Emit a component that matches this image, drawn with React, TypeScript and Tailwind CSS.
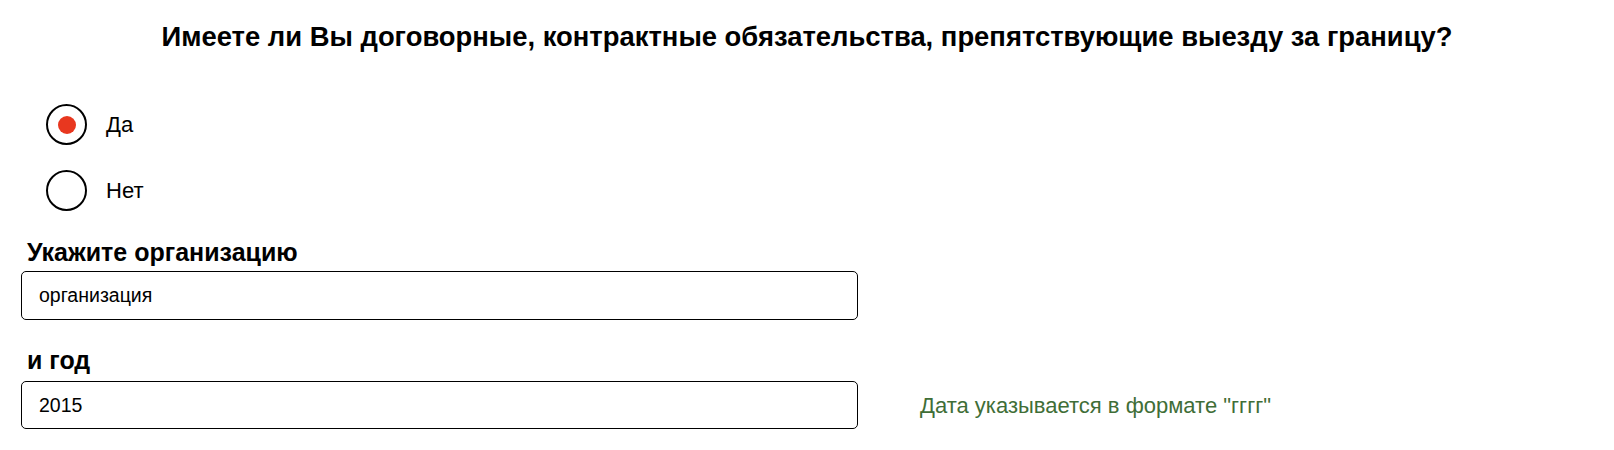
import { useState } from 'react';

function App() {
  const [answer, setAnswer] = useState<'yes' | 'no'>('yes');
  const [org, setOrg] = useState('организация');
  const [year, setYear] = useState('2015');

  const options = [
    { value: 'yes' as const, label: 'Да' },
    { value: 'no' as const, label: 'Нет' }
  ];

  return (
    <div className="min-h-screen bg-white text-black font-['Liberation_Sans',Arial,sans-serif]">
      <h1 className="pt-[22px] text-center text-[27.4px] leading-[30px] font-bold">
        Имеете ли Вы договорные, контрактные обязательства, препятствующие выезду за границу?
      </h1>

      <div className="mt-[52px] pl-[46px] flex flex-col gap-[25px]">
        {options.map((option) => (
          <label key={option.value} className="flex items-center gap-[19px] cursor-pointer">
            <span className="w-[41px] h-[41px] rounded-full border-2 border-black flex items-center justify-center">
              {answer === option.value && (
                <span className="w-[18px] h-[18px] rounded-full bg-[#e8371f]" />
              )}
            </span>
            <input
              type="radio"
              name="contract"
              className="hidden"
              checked={answer === option.value}
              onChange={() => setAnswer(option.value)}
            />
            <span className="text-[22px]">{option.label}</span>
          </label>
        ))}
      </div>

      <div className="px-[21px] mt-[26px]">
        <div className="text-[25px] leading-[30px] font-bold pl-[6px]">Укажите организацию</div>
        <input
          value={org}
          onChange={(e) => setOrg(e.target.value)}
          className="mt-[4px] block w-[837px] h-[49px] px-[17px] border border-black rounded-[5px] text-[19.5px] outline-none"
        />

        <div className="mt-[25px] text-[25px] leading-[30px] font-bold pl-[6px]">и год</div>
        <div className="mt-[6px] flex items-center">
          <input
            value={year}
            onChange={(e) => setYear(e.target.value)}
            className="block w-[837px] h-[48px] px-[17px] border border-black rounded-[5px] text-[19.5px] outline-none"
          />
          <span className="ml-[62px] text-[22px] text-[#3f6e37]">Дата указывается в формате "гггг"</span>
        </div>
      </div>
    </div>
  );
}

export default App;
